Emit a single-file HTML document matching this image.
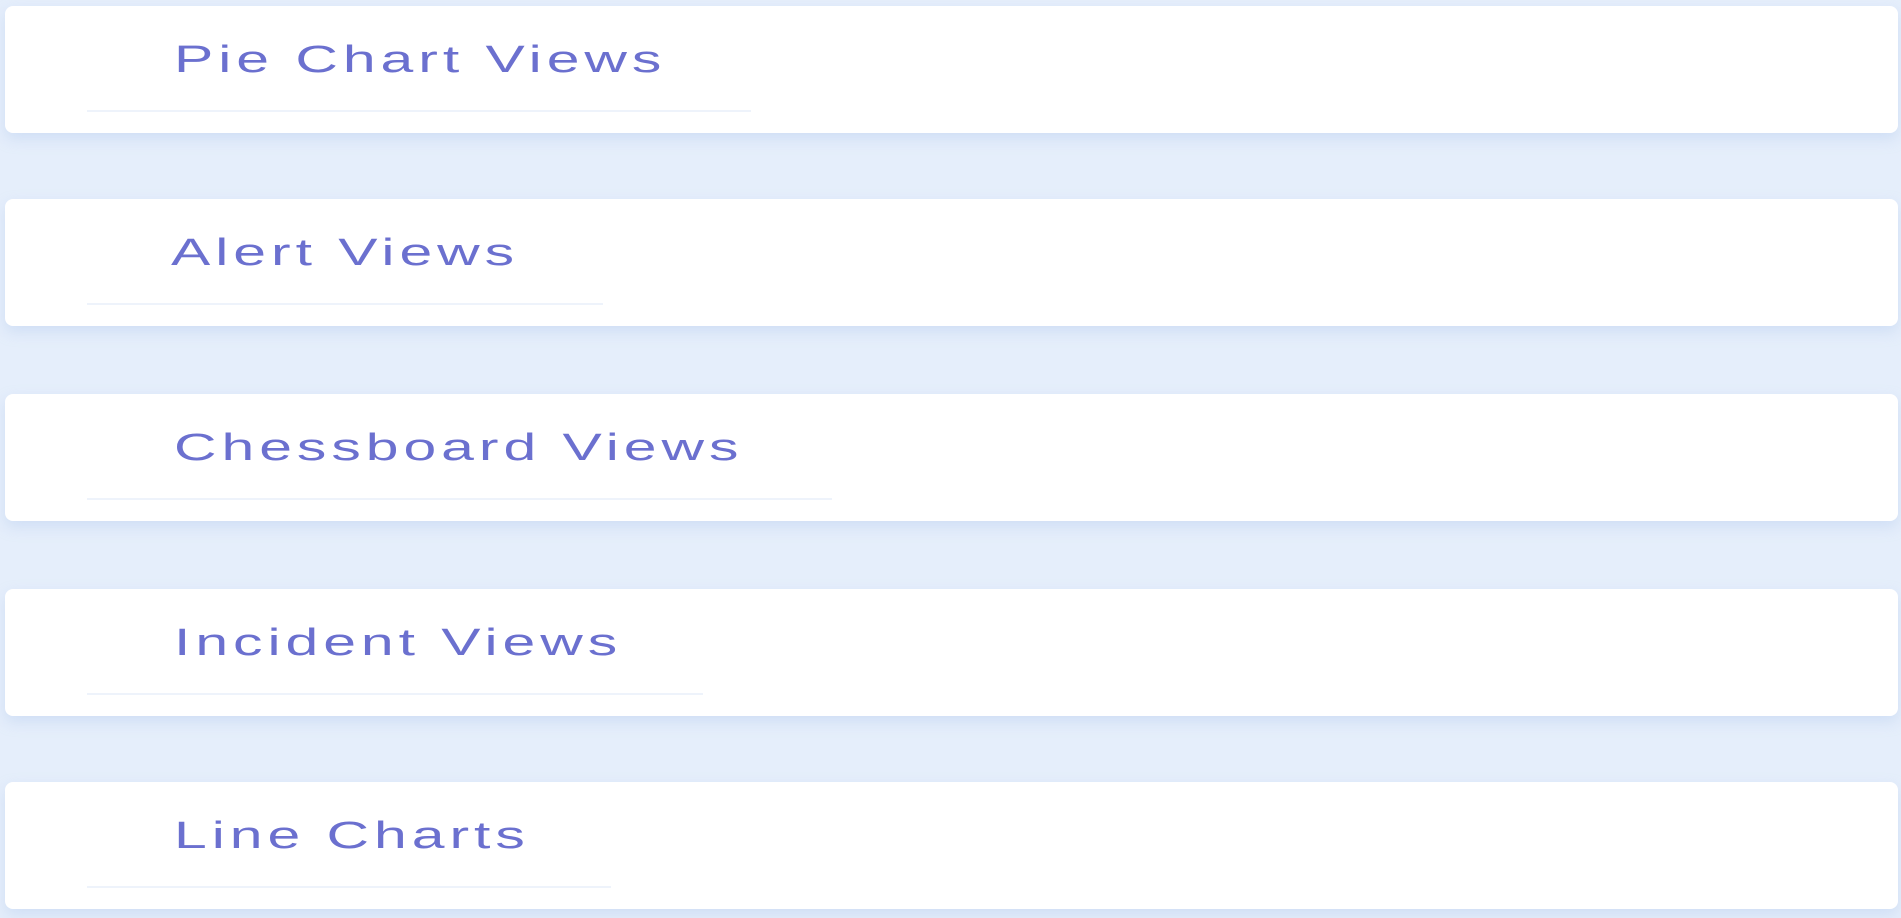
<!DOCTYPE html>
<html><head><style>
html,body{margin:0;padding:0;}
body{width:1901px;height:918px;background:#e5eefb;position:relative;overflow:hidden;font-family:"Liberation Sans",Arial,sans-serif;}
.card{position:absolute;left:5px;width:1893px;height:127px;background:#fff;border-radius:8px;box-shadow:0 6px 14px rgba(170,195,235,.35);}
.t{position:absolute;left:169px;top:34px;font-size:38px;line-height:40px;color:#6b70cf;letter-spacing:3.2px;transform:scaleX(1.55);transform-origin:0 0;white-space:nowrap;}
.l{position:absolute;left:82px;top:104px;height:2px;background:#eef3fb;}
</style></head><body>
<div class="card" style="top:6px"><div class="t">Pie Chart Views</div><div class="l" style="width:664px"></div></div>
<div class="card" style="top:199px"><div class="t" style="left:166px">Alert Views</div><div class="l" style="width:516px"></div></div>
<div class="card" style="top:394px"><div class="t">Chessboard Views</div><div class="l" style="width:745px"></div></div>
<div class="card" style="top:589px"><div class="t">Incident Views</div><div class="l" style="width:616px"></div></div>
<div class="card" style="top:782px"><div class="t">Line Charts</div><div class="l" style="width:524px"></div></div>
</body></html>
